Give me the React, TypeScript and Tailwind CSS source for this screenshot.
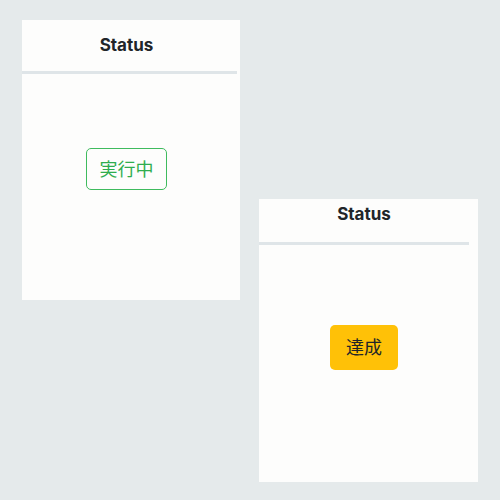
const font = { fontFamily: 'Inter, "Noto Sans CJK JP", sans-serif' }

function StatusCard({
  children,
  className,
  headerClass,
  dividerClass,
  bodyClass,
}: {
  children: React.ReactNode
  className: string
  headerClass: string
  dividerClass: string
  bodyClass: string
}) {
  return (
    <div className={`flex flex-col bg-[#fdfdfc] ${className}`}>
      <div className={`pr-[9px] text-center text-[17px] font-bold text-[#212529] ${headerClass}`}>Status</div>
      <div className={`h-[3px] bg-[#dfe5e8] ${dividerClass}`} />
      <div className={`flex justify-center pr-[9px] ${bodyClass}`}>{children}</div>
    </div>
  )
}

export default function App() {
  return (
    <div className="min-h-[500px] w-[500px] bg-[#e5eaeb] pl-[22px] pt-[20px]" style={font}>
      <div className="flex items-start gap-[19px]">
        <StatusCard
          className="h-[280px] w-[218px]"
          headerClass="h-[51px] leading-[51px]"
          dividerClass="mr-[3px]"
          bodyClass="pt-[74px]"
        >
          <span className="flex h-[42px] w-[81px] items-center justify-center rounded-[5px] border border-[#3fbb5e] text-[18px] text-[#2fad4e]">
            実行中
          </span>
        </StatusCard>
        <StatusCard
          className="mt-[179px] h-[283px] w-[219px]"
          headerClass="h-[43px] pt-[2px] leading-[26px]"
          dividerClass="mr-[9px]"
          bodyClass="pt-[80px]"
        >
          <span className="flex h-[45px] w-[68px] items-center justify-center rounded-[5px] bg-[#ffc107] text-[18px] text-[#212529]">
            達成
          </span>
        </StatusCard>
      </div>
    </div>
  )
}
